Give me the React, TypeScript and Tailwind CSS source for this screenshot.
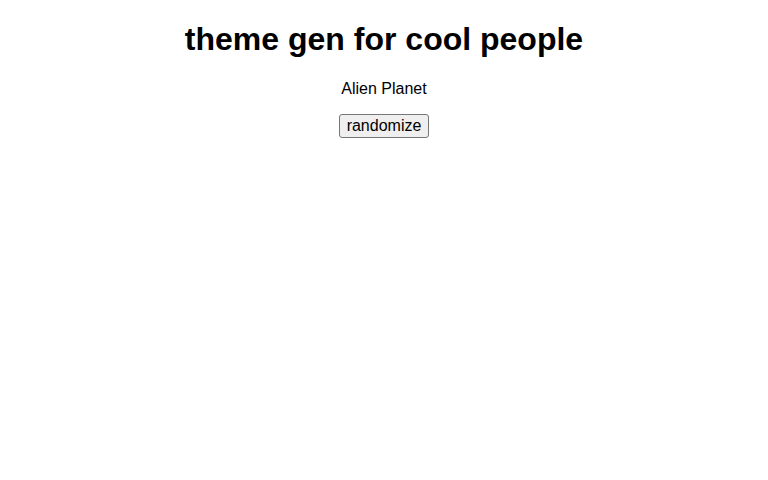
import React, { useState } from "react";

const themes = ["Alien Planet", "Desert Dusk", "Ocean Floor", "Neon City", "Forest Glade"];

export default function App() {
  const [idx, setIdx] = useState(0);
  return (
    <div className="flow-root text-center text-black bg-white min-h-screen" style={{ fontFamily: '"Liberation Sans", Arial, sans-serif' }}>
      <h1 className="text-[32px] leading-[normal] font-bold my-[21.44px]">theme gen for cool people</h1>
      <p className="text-base leading-[normal] my-4">{themes[idx]}</p>
      <button
        className="text-base leading-[normal] bg-[#efefef] border border-[#767676] rounded-[3px] px-[7px] py-[2px] hover:bg-[#e5e5e5]"
        onClick={() => setIdx((i) => (i + 1) % themes.length)}
      >
        randomize
      </button>
    </div>
  );
}
